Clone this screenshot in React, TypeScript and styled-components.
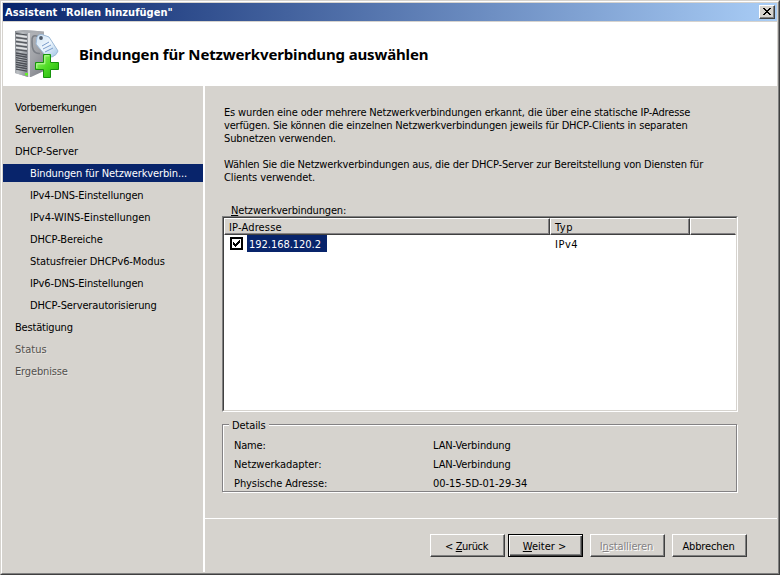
import React from "react";
import styled, { createGlobalStyle, css } from "styled-components";

const face = "#d6d3ce";
const shadow = "#808080";
const dark = "#404040";
const navy = "#08246b";

const GlobalStyle = createGlobalStyle`
  * { box-sizing: border-box; }
  body {
    margin: 0;
    background: ${face};
    color: #000;
    font: 11px/13px "DejaVu Sans Condensed", "DejaVu Sans", Tahoma, sans-serif;
    white-space: nowrap;
    overflow: hidden;
  }
`;

const raised = css`
  border: 1px solid;
  border-color: #fff ${dark} ${dark} #fff;
  box-shadow: inset -1px -1px 0 ${shadow};
`;

const Label = styled.span<{ $track?: number }>`
  letter-spacing: ${(p) => p.$track ?? -0.15}px;
`;

const WindowFrame = styled.div`
  width: 780px;
  height: 575px;
  border: 1px solid;
  border-color: ${face} ${dark} ${dark} ${face};
`;

const WindowInner = styled.div`
  height: 100%;
  display: flex;
  flex-direction: column;
  padding: 1px;
  border: 1px solid;
  border-color: #fff ${shadow} ${shadow} #fff;
  background: ${face};
`;

const TitleBar = styled.header`
  height: 18px;
  margin-bottom: 1px;
  padding: 0 2px;
  display: flex;
  align-items: center;
  justify-content: space-between;
  background: linear-gradient(to right, ${navy}, #a9cdf6);
  color: #fff;
  font-weight: 700;
`;

const CloseButton = styled.button`
  ${raised}
  width: 16px;
  height: 14px;
  padding: 2px 0 0 3px;
  display: flex;
  background: ${face};
`;

const Banner = styled.div`
  height: 64px;
  padding-left: 9px;
  display: flex;
  align-items: center;
  gap: 18px;
  background: #fff;
`;

const Heading = styled.h1`
  margin: 0;
  font-family: "Noto Sans", Tahoma, sans-serif;
  font-size: 15px;
  line-height: 20px;
`;

const Body = styled.div`
  flex: 1;
  display: flex;
  min-height: 0;
`;

const Sidebar = styled.nav`
  width: 202px;
  padding-top: 12px;
  border-right: 2px solid #fff;
  display: flex;
  flex-direction: column;
  gap: 4px;
`;

const Step = styled.div<{ $nested?: boolean; $state?: "current" | "disabled" }>`
  height: 18px;
  line-height: 20px;
  padding-left: ${(p) => (p.$nested ? 27 : 12)}px;
  ${(p) => p.$state === "current" && `background: ${navy}; color: #fff;`}
  ${(p) => p.$state === "disabled" && `color: #53514e; text-shadow: 1px 1px 0 #e6e4e0;`}
`;

const Main = styled.main`
  flex: 1;
  display: flex;
  flex-direction: column;
`;

const Content = styled.section`
  height: 432px;
  padding: 20px 39px 0 17px;
  display: flex;
  flex-direction: column;
`;

const Paragraph = styled.p`
  margin: 0 0 13px 2px;
  display: flex;
  flex-direction: column;
`;

const ListCaption = styled.div`
  margin: 7px 0 0 9px;
  height: 13px;
  line-height: 13px;
`;

const ListView = styled.div`
  height: 196px;
  margin-top: -1px;
  border: 1px solid;
  border-color: ${shadow} #fff #fff ${shadow};
`;

const ListInner = styled.div`
  height: 100%;
  background: #fff;
  border: 1px solid;
  border-color: ${dark} ${face} ${face} ${dark};
`;

const Columns = styled.div`
  display: grid;
  grid-template-columns: 326px 140px 1fr;
`;

const HeaderCell = styled.div<{ $last?: boolean }>`
  height: 17px;
  padding-left: 4px;
  line-height: 17px;
  background: ${face};
  border: 1px solid;
  border-color: #fff ${(p) => (p.$last ? face : dark)} ${dark} #fff;
  box-shadow: inset ${(p) => (p.$last ? 0 : -1)}px -1px 0 #848284;
`;

const ItemCell = styled.div`
  height: 17px;
  line-height: 19px;
  padding-left: 5px;
`;

const CheckCell = styled.div`
  height: 17px;
  padding-left: 6px;
  display: flex;
  align-items: center;
`;

const Checkbox = styled.span`
  width: 13px;
  height: 13px;
  border: 2px solid #000;
  background: #fff;
  display: flex;
`;

const SelectedText = styled.span`
  height: 17px;
  width: 80px;
  margin-left: 4px;
  padding-left: 2px;
  line-height: 19px;
  background: ${navy};
  color: #fff;
`;

const GroupBox = styled.fieldset`
  height: 76px;
  margin: 6px 0 0;
  padding: 1px 0 0 7px;
  border: 0;
  min-width: 0;
  display: flex;
  flex-direction: column;
  position: relative;
`;

const GroupEdge = styled.span`
  position: absolute;
  inset: 6px 1px 1px 0;
  border: 1px solid #848284;
  box-shadow: 1px 1px 0 #fff, inset 1px 1px 0 #fff;
`;

const GroupTitle = styled.span`
  position: relative;
  align-self: flex-start;
  width: 40px;
  padding-left: 3px;
  background: ${face};
`;

const DetailGrid = styled.dl`
  margin: 4px 0 0 5px;
  display: grid;
  grid-template-columns: 199px 1fr;
  grid-auto-rows: 19px;
  line-height: 19px;
`;

const Cell = styled.div``;

const Footer = styled.footer`
  flex: 1;
  padding: 15px 30px 0 0;
  border-top: 1px solid #fff;
  display: flex;
  justify-content: flex-end;
`;

const Button = styled.button<{ $primary?: boolean; $gap?: number }>`
  width: 75px;
  height: 23px;
  margin-left: ${(p) => p.$gap ?? 0}px;
  padding: 1px 2px 0 0;
  font: inherit;
  color: #000;
  background: ${face};
  ${raised}
  ${(p) =>
    p.$primary &&
    css`
      border-color: #000;
      box-shadow: inset 1px 1px 0 #fff, inset -1px -1px 0 ${dark}, inset -2px -2px 0 ${shadow};
    `}
  &:disabled {
    color: #848284;
    text-shadow: 1px 1px 0 #fff;
  }
`;

const Key = styled.u`
  text-underline-offset: 1px;
  text-decoration-thickness: 1px;
  text-decoration-skip-ink: none;
`;

const steps: { text: string; track: number; nested?: boolean; state?: "current" | "disabled" }[] = [
  { text: "Vorbemerkungen", track: -0.24 },
  { text: "Serverrollen", track: -0.1 },
  { text: "DHCP-Server", track: -0.06 },
  { text: "Bindungen für Netzwerkverbin...", track: -0.12, nested: true, state: "current" },
  { text: "IPv4-DNS-Einstellungen", track: -0.14, nested: true },
  { text: "IPv4-WINS-Einstellungen", track: -0.03, nested: true },
  { text: "DHCP-Bereiche", track: -0.12, nested: true },
  { text: "Statusfreier DHCPv6-Modus", track: -0.09, nested: true },
  { text: "IPv6-DNS-Einstellungen", track: -0.14, nested: true },
  { text: "DHCP-Serverautorisierung", track: -0.13, nested: true },
  { text: "Bestätigung", track: -0.18 },
  { text: "Status", track: 0.03, state: "disabled" },
  { text: "Ergebnisse", track: -0.15, state: "disabled" },
];

const details: [string, number, string, number][] = [
  ["Name:", -0.2, "LAN-Verbindung", -0.12],
  ["Netzwerkadapter:", -0.05, "LAN-Verbindung", -0.12],
  ["Physische Adresse:", -0.08, "00-15-5D-01-29-34", -0.03],
];

function ServerIcon() {
  return (
    <svg width="49" height="52" viewBox="12 28 49 52">
      <defs>
        <linearGradient id="front" x1="0" x2="1" y1="0" y2="0.4">
          <stop offset="0" stopColor="#82868c" />
          <stop offset="0.5" stopColor="#bcc0c4" />
          <stop offset="1" stopColor="#93979e" />
        </linearGradient>
        <linearGradient id="side" x1="0" x2="1" y1="0" y2="1">
          <stop offset="0" stopColor="#c0c2c6" />
          <stop offset="0.6" stopColor="#a2a4a9" />
          <stop offset="1" stopColor="#7c7e85" />
        </linearGradient>
        <linearGradient id="tag" x1="0" x2="1" y1="0" y2="1">
          <stop offset="0" stopColor="#cfe2f3" />
          <stop offset="0.5" stopColor="#eef6fd" />
          <stop offset="1" stopColor="#9fc3e4" />
        </linearGradient>
        <linearGradient id="plus" x1="0" x2="1" y1="0" y2="1">
          <stop offset="0" stopColor="#a4f27c" />
          <stop offset="0.5" stopColor="#4fdc25" />
          <stop offset="1" stopColor="#1fae0c" />
        </linearGradient>
      </defs>
      <path d="M15 31 24 30 44 31.5 44 71 31 77 28 77 15 73Z" fill="url(#side)" />
      <path d="M15 31 24 30 44 31.5 29 33Z" fill="#a9acb1" />
      <path d="M15 31 28 33 28 77 15 73Z" fill="url(#front)" />
      <path d="M28 33 30 33 30 77 28 77Z" fill="#dedfe2" />
      <path d="M16 33.5 27 35" stroke="#4b4e54" strokeWidth="1.2" />
      <path d="M16 37.5 27 39M16 41.5 27 43M16 45.5 27 47M16 49.5 27 51" stroke="#595c62" strokeWidth="1.5" />
      <path d="M16 35.5 27 37M16 39.5 27 41M16 43.5 27 45M16 47.5 27 49" stroke="#e2e3e5" strokeWidth="1.4" />
      <path d="M16 53 27 55M16 55.3 27 57.3M16 57.6 27 59.6M16 59.9 27 61.9M16 62.2 27 64.2M16 64.5 27 66.5M16 66.8 27 68.8M16 69.1 27 71.1" stroke="#4c4f56" strokeWidth="1.4" />
      <rect x="25" y="73" width="3" height="2.5" fill="#65ed2b" />
      <path d="M38 36.5C33 34.5 31.5 37 32 42C32 48 33 54 40 53.5" fill="none" stroke="#7b7f86" strokeWidth="1.6" />
      <path d="M37 37 Q38 34 42 34.5L49 37 58 51 Q57 55 52 57L45 55 36 44Z" fill="url(#tag)" stroke="#9db9d6" />
      <circle cx="41" cy="38" r="1.9" fill="#4f5968" />
      <path d="M42 46 49 42M43 49 51 45M45 52 53 48" stroke="#7a9bca" />
      <path d="M43.5 54.5H50.5V62.5H58.5V69.5H50.5V77.5H43.5V69.5H35.5V62.5H43.5Z" fill="url(#plus)" stroke="#16930b" />
      <path d="M44.8 63.8V55.8H49.2M36.8 68V63.8H44.8" fill="none" stroke="#baff99" />
    </svg>
  );
}

function CloseGlyph() {
  return (
    <svg width="8" height="7" viewBox="0 0 8 7" shapeRendering="crispEdges">
      <path d="M0 0h2v1h-2zM6 0h2v1h-2zM1 1h2v1h-2zM5 1h2v1h-2zM2 2h4v1h-4zM3 3h2v1h-2zM2 4h4v1h-4zM1 5h2v1h-2zM5 5h2v1h-2zM0 6h2v1h-2zM6 6h2v1h-2z" />
    </svg>
  );
}

function CheckMark() {
  return (
    <svg width="9" height="9" viewBox="0 0 9 9" shapeRendering="crispEdges">
      <path d="M1 3h1v3h-1zM2 4h1v3h-1zM3 5h1v3h-1zM4 4h1v3h-1zM5 3h1v3h-1zM6 2h1v3h-1zM7 1h1v3h-1z" />
    </svg>
  );
}

export default function App() {
  return (
    <>
      <GlobalStyle />
      <WindowFrame>
        <WindowInner>
          <TitleBar>
            <Label $track={0.04}>Assistent "Rollen hinzufügen"</Label>
            <CloseButton aria-label="Schließen">
              <CloseGlyph />
            </CloseButton>
          </TitleBar>
          <Banner>
            <ServerIcon />
            <Heading>
              <Label $track={-0.15}>Bindungen für Netzwerkverbindung auswählen</Label>
            </Heading>
          </Banner>
          <Body>
            <Sidebar>
              {steps.map((s) => (
                <Step key={s.text} $nested={s.nested} $state={s.state}>
                  <Label $track={s.track}>{s.text}</Label>
                </Step>
              ))}
            </Sidebar>
            <Main>
              <Content>
                <Paragraph>
                  <Label $track={-0.15}>Es wurden eine oder mehrere Netzwerkverbindungen erkannt, die über eine statische IP-Adresse</Label>
                  <Label $track={-0.18}>verfügen. Sie können die einzelnen Netzwerkverbindungen jeweils für DHCP-Clients in separaten</Label>
                  <Label $track={-0.11}>Subnetzen verwenden.</Label>
                </Paragraph>
                <Paragraph>
                  <Label $track={-0.18}>Wählen Sie die Netzwerkverbindungen aus, die der DHCP-Server zur Bereitstellung von Diensten für</Label>
                  <Label $track={-0.1}>Clients verwendet.</Label>
                </Paragraph>
                <ListCaption>
                  <Label $track={-0.17}>
                    <Key>N</Key>etzwerkverbindungen:
                  </Label>
                </ListCaption>
                <ListView>
                  <ListInner>
                    <Columns>
                      <HeaderCell>
                        <Label $track={0.16}>IP-Adresse</Label>
                      </HeaderCell>
                      <HeaderCell>
                        <Label $track={0.5}>Typ</Label>
                      </HeaderCell>
                      <HeaderCell $last />
                      <CheckCell>
                        <Checkbox>
                          <CheckMark />
                        </Checkbox>
                        <SelectedText>
                          <Label $track={-0.03}>192.168.120.2</Label>
                        </SelectedText>
                      </CheckCell>
                      <ItemCell>
                        <Label $track={0.5}>IPv4</Label>
                      </ItemCell>
                    </Columns>
                  </ListInner>
                </ListView>
                <GroupBox>
                  <GroupEdge />
                  <GroupTitle>
                    <Label $track={-0.12}>Details</Label>
                  </GroupTitle>
                  <DetailGrid>
                    {details.map(([name, nameTrack, value, valueTrack]) => (
                      <React.Fragment key={name}>
                        <Cell>
                          <Label $track={nameTrack}>{name}</Label>
                        </Cell>
                        <Cell>
                          <Label $track={valueTrack}>{value}</Label>
                        </Cell>
                      </React.Fragment>
                    ))}
                  </DetailGrid>
                </GroupBox>
              </Content>
              <Footer>
                <Button>
                  <Label $track={-0.38}>
                    &lt; <Key>Z</Key>urück
                  </Label>
                </Button>
                <Button $primary $gap={3}>
                  <Label $track={0}>
                    <Key>W</Key>eiter &gt;
                  </Label>
                </Button>
                <Button disabled $gap={7}>
                  <Label $track={-0.12}>
                    I<Key>n</Key>stallieren
                  </Label>
                </Button>
                <Button $gap={7}>
                  <Label $track={-0.12}>Abbrechen</Label>
                </Button>
              </Footer>
            </Main>
          </Body>
        </WindowInner>
      </WindowFrame>
    </>
  );
}
